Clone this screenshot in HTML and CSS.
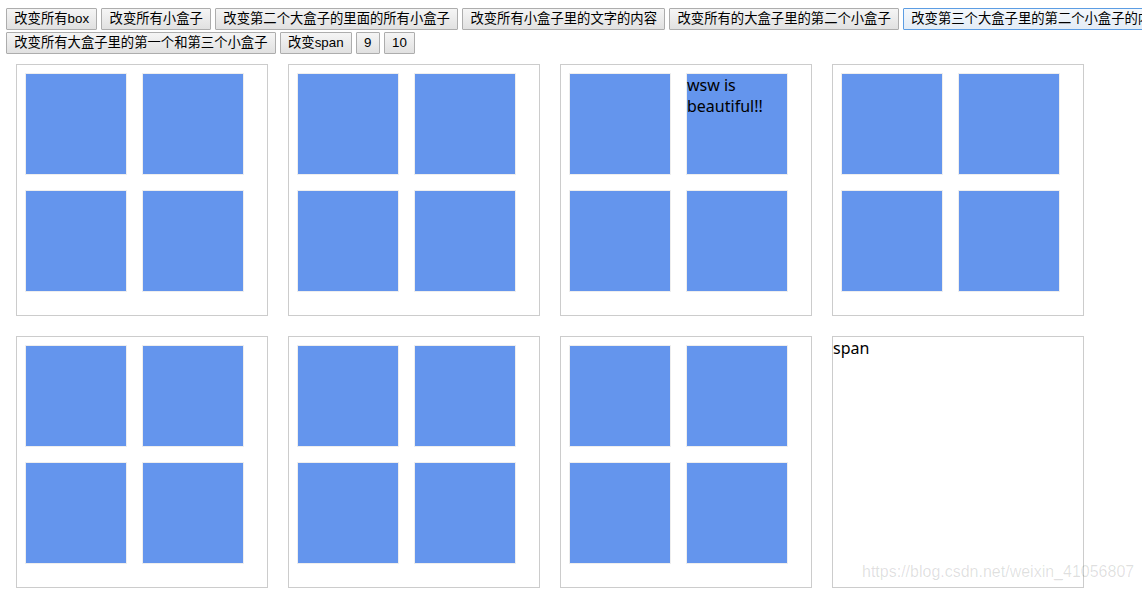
FILE: index.html
```html
<!DOCTYPE html>
<html lang="zh-CN">
<head>
<meta charset="utf-8">
<title>盒子</title>
<link rel="stylesheet" href="styles.css">
</head>
<body>
<div class="toolbar">
  <div class="btn-row">
    <button class="btn">改变所有box</button>
    <button class="btn">改变所有小盒子</button>
    <button class="btn">改变第二个大盒子的里面的所有小盒子</button>
    <button class="btn">改变所有小盒子里的文字的内容</button>
    <button class="btn">改变所有的大盒子里的第二个小盒子</button>
    <button class="btn btn-focus">改变第三个大盒子里的第二个小盒子的内容</button>
  </div>
  <div class="btn-row">
    <button class="btn">改变所有大盒子里的第一个和第三个小盒子</button>
    <button class="btn">改变span</button>
    <button class="btn">9</button>
    <button class="btn">10</button>
  </div>
</div>
<div class="boards">
  <div class="board"><div class="cell"></div><div class="cell"></div><div class="cell"></div><div class="cell"></div></div>
  <div class="board"><div class="cell"></div><div class="cell"></div><div class="cell"></div><div class="cell"></div></div>
  <div class="board"><div class="cell"></div><div class="cell">wsw is beautiful!!</div><div class="cell"></div><div class="cell"></div></div>
  <div class="board"><div class="cell"></div><div class="cell"></div><div class="cell"></div><div class="cell"></div></div>
  <div class="board"><div class="cell"></div><div class="cell"></div><div class="cell"></div><div class="cell"></div></div>
  <div class="board"><div class="cell"></div><div class="cell"></div><div class="cell"></div><div class="cell"></div></div>
  <div class="board"><div class="cell"></div><div class="cell"></div><div class="cell"></div><div class="cell"></div></div>
  <div class="board board-text"><span>span</span></div>
</div>
<div class="watermark">https://blog.csdn.net/weixin_41056807</div>
</body>
</html>
```

FILE: styles.css
```css
html {
  overflow: hidden;
}
body {
  margin: 8px 0 0 6px;
  font-family: "Noto Sans", "Noto Sans CJK SC", sans-serif;
  font-size: 16px;
  color: #000;
  background: #fff;
  overflow: hidden;
}
.toolbar {
  display: flex;
  flex-direction: column;
  gap: 2px;
}
.btn-row {
  display: flex;
  gap: 4px;
  white-space: nowrap;
}
.btn {
  flex-shrink: 0;
  height: 22px;
  margin: 0;
  padding: 0 7.25px;
  font-family: "Liberation Sans", "Noto Sans CJK SC", sans-serif;
  font-size: 13.333px;
  line-height: 20px;
  color: #000;
  background: linear-gradient(#f5f5f5, #e1e1e1);
  border: 1px solid #adadad;
  border-radius: 1px;
}
.btn-focus {
  border-color: #5c9de3;
  background: linear-gradient(#f4f8fc, #e3ecf6);
}
.boards {
  display: grid;
  grid-template-columns: repeat(4, 252px);
  grid-auto-rows: 252px;
  gap: 20px;
  padding: 10px 0 0 10px;
}
.board {
  box-sizing: border-box;
  border: 1px solid #cccccc;
  display: grid;
  grid-template-columns: 102px 102px;
  grid-auto-rows: 102px;
  gap: 15px;
  padding: 8px;
  align-content: start;
}
.board-text {
  display: block;
  padding: 1px 0 0;
  line-height: 21px;
}
.cell {
  box-sizing: border-box;
  border: 1px solid #eeeeee;
  padding-top: 1px;
  background: #6495ed;
  line-height: 21px;
  overflow-wrap: break-word;
}
.watermark {
  position: absolute;
  left: 862px;
  top: 563px;
  font-family: "Liberation Sans", sans-serif;
  font-size: 16px;
  color: rgba(0, 0, 0, 0.13);
  white-space: nowrap;
}
```
